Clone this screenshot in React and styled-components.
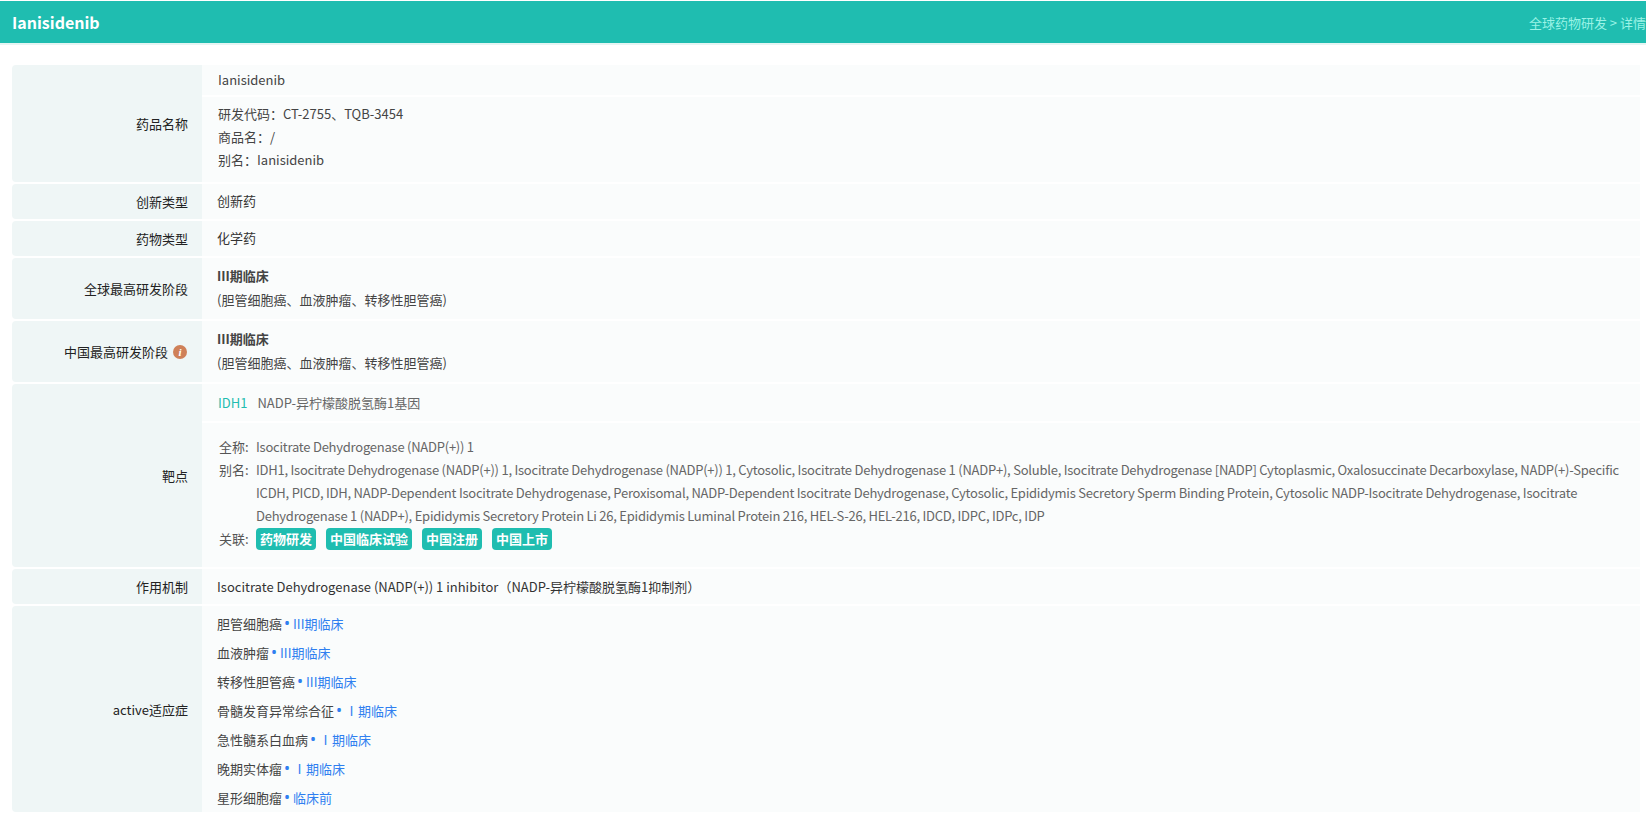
import React from "react";
import styled, { createGlobalStyle } from "styled-components";

const Global = createGlobalStyle`
  html, body { margin: 0; padding: 0; height: 100%; overflow: hidden; background: #fff; }
  body { font-family: "Noto Sans CJK SC", "Noto Sans", sans-serif; font-size: 13px; color: #333; }
`;

const Header = styled.div`
  margin-top: 1px;
  height: 42px;
  background: #1fbdb0;
  border-bottom: 2px solid #e6f5f3;
  display: flex;
  align-items: center;
  justify-content: space-between;
  padding-left: 12px;
  overflow: hidden;
`;

const Title = styled.div`
  color: #fff;
  font-size: 16px;
  font-weight: 700;
`;

const Crumb = styled.div`
  color: #9af3e6;
  font-size: 13px;
  white-space: nowrap;
`;

const Table = styled.div`
  margin: 20px 6px 0 12px;
  display: flex;
  flex-direction: column;
  gap: 2px;
`;

const Row = styled.div`
  display: flex;
  min-height: ${(p) => p.$h || 35}px;
`;

const Label = styled.div`
  width: 190px;
  flex-shrink: 0;
  box-sizing: border-box;
  background: #eff6f6;
  border-radius: 4px 0 0 4px;
  padding-right: 14px;
  display: flex;
  align-items: center;
  justify-content: flex-end;
  gap: 5px;
  color: #222;
`;

const Info = styled.span`
  width: 14px;
  height: 14px;
  border-radius: 50%;
  background: #cf8058;
  color: #fff;
  font: italic 700 11px/14px "Liberation Serif", serif;
  text-align: center;
  margin-right: 1px;
`;

const Value = styled.div`
  flex: 1;
  min-width: 0;
  box-sizing: border-box;
  background: #fafcfc;
  padding: ${(p) => p.$pad || "0 0 2px 15px"};
  display: flex;
  flex-direction: column;
  justify-content: ${(p) => (p.$top ? "flex-start" : "center")};
`;

const Stack = styled.div`
  flex: 1;
  min-width: 0;
  display: flex;
  flex-direction: column;
  gap: 2px;
`;

const Cell = styled.div`
  background: #fafcfc;
  box-sizing: border-box;
  padding: ${(p) => p.$pad};
  height: ${(p) => p.$h}px;
`;

const Line = styled.div`
  line-height: ${(p) => p.$lh || 23}px;
  color: #444;
  font-weight: ${(p) => (p.$bold ? 700 : 400)};
`;

const TargetName = styled.div`
  height: 37px;
  line-height: 38px;
  padding-left: 16px;
  color: #666;
  border-bottom: 2px solid #fff;
`;

const Symbol = styled.span`
  color: #1fbdb0;
  margin-right: 10px;
`;

const TargetBody = styled.div`
  padding: 12px 10px 0 17px;
  display: grid;
  grid-template-columns: 37px 1fr;
  color: #666;
  line-height: 23px;
`;

const Key = styled.div`
  color: #555;
`;

const Latin = styled.div`
  letter-spacing: -0.235px;
`;

const Tags = styled.div`
  display: flex;
  gap: 10px;
  align-items: center;
  height: 23px;
`;

const Tag = styled.span`
  background: #1fbdb0;
  color: #fff;
  font-weight: 700;
  border-radius: 4px;
  height: 22px;
  line-height: 22px;
  padding: 0 4px;
`;

const Indication = styled.div`
  height: 29px;
  line-height: 29px;
  color: #444;
`;

const Phase = styled.span`
  color: #2f7ff0;
`;

const Dot = styled.span`
  font-family: "Noto Sans", sans-serif;
  font-size: 16px;
  line-height: 0;
  margin: 0 3px 0 2px;
`;

const indications = [
  ["胆管细胞癌", "III期临床"],
  ["血液肿瘤", "III期临床"],
  ["转移性胆管癌", "III期临床"],
  ["骨髓发育异常综合征", "Ⅰ期临床"],
  ["急性髓系白血病", "Ⅰ期临床"],
  ["晚期实体瘤", "Ⅰ期临床"],
  ["星形细胞瘤", "临床前"],
];

const alias =
  "IDH1, Isocitrate Dehydrogenase (NADP(+)) 1, Isocitrate Dehydrogenase (NADP(+)) 1, Cytosolic, Isocitrate Dehydrogenase 1 (NADP+), Soluble, Isocitrate Dehydrogenase [NADP] Cytoplasmic, Oxalosuccinate Decarboxylase, NADP(+)-Specific ICDH, PICD, IDH, NADP-Dependent Isocitrate Dehydrogenase, Peroxisomal, NADP-Dependent Isocitrate Dehydrogenase, Cytosolic, Epididymis Secretory Sperm Binding Protein, Cytosolic NADP-Isocitrate Dehydrogenase, Isocitrate Dehydrogenase 1 (NADP+), Epididymis Secretory Protein Li 26, Epididymis Luminal Protein 216, HEL-S-26, HEL-216, IDCD, IDPC, IDPc, IDP";

const Stage = () => (
  <>
    <Line $lh={24} $bold>III期临床</Line>
    <Line $lh={24}>(胆管细胞癌、血液肿瘤、转移性胆管癌)</Line>
  </>
);

export default function App() {
  return (
    <>
      <Global />
      <Header>
        <Title>Ianisidenib</Title>
        <Crumb>全球药物研发 &gt; 详情</Crumb>
      </Header>
      <Table>
        <Row>
          <Label>药品名称</Label>
          <Stack>
            <Cell $h={30} $pad="0 0 0 16px">
              <Line $lh={30}>Ianisidenib</Line>
            </Cell>
            <Cell $h={85} $pad="5px 0 0 16px">
              <Line>研发代码：CT-2755、TQB-3454</Line>
              <Line>商品名：/</Line>
              <Line>别名：Ianisidenib</Line>
            </Cell>
          </Stack>
        </Row>
        <Row>
          <Label>创新类型</Label>
          <Value>创新药</Value>
        </Row>
        <Row>
          <Label>药物类型</Label>
          <Value>化学药</Value>
        </Row>
        <Row $h={61}>
          <Label>全球最高研发阶段</Label>
          <Value>
            <Stage />
          </Value>
        </Row>
        <Row $h={61}>
          <Label>
            中国最高研发阶段<Info>i</Info>
          </Label>
          <Value>
            <Stage />
          </Value>
        </Row>
        <Row $h={183}>
          <Label>靶点</Label>
          <Value $top $pad="0">
            <TargetName>
              <Symbol>IDH1</Symbol>NADP-异柠檬酸脱氢酶1基因
            </TargetName>
            <TargetBody>
              <Key>全称:</Key>
              <Latin>Isocitrate Dehydrogenase (NADP(+)) 1</Latin>
              <Key>别名:</Key>
              <Latin>{alias}</Latin>
              <Key>关联:</Key>
              <Tags>
                <Tag>药物研发</Tag>
                <Tag>中国临床试验</Tag>
                <Tag>中国注册</Tag>
                <Tag>中国上市</Tag>
              </Tags>
            </TargetBody>
          </Value>
        </Row>
        <Row>
          <Label>作用机制</Label>
          <Value $pad="0 0 0 15px">Isocitrate Dehydrogenase (NADP(+)) 1 inhibitor（NADP-异柠檬酸脱氢酶1抑制剂）</Value>
        </Row>
        <Row>
          <Label>active适应症</Label>
          <Value $top $pad="3px 0 0 15px">
            {indications.map(([name, phase]) => (
              <Indication key={name}>
                {name}
                <Phase>
                  <Dot>•</Dot>
                  {phase}
                </Phase>
              </Indication>
            ))}
          </Value>
        </Row>
      </Table>
    </>
  );
}
